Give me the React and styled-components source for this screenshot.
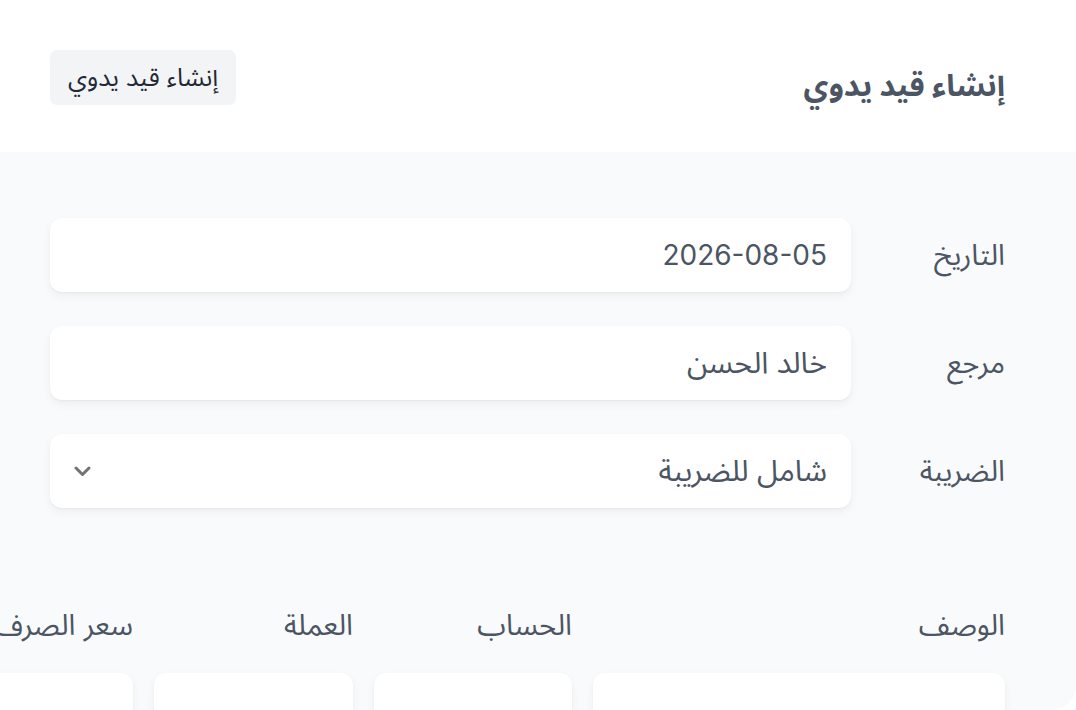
import React from "react";
import styled, { createGlobalStyle } from "styled-components";

const GlobalStyle = createGlobalStyle`
  html, body {
    margin: 0;
    padding: 0;
    overflow: hidden;
    background: #ffffff;
  }
  body {
    font-family: Inter, "Noto Sans Arabic", "Noto Sans", "DejaVu Sans", sans-serif;
    color: #4b5563;
  }
  * { box-sizing: border-box; }
`;

const Page = styled.div`
  direction: rtl;
  width: 1076px;
  height: 710px;
  display: flex;
  flex-direction: column;
`;

const Header = styled.header`
  height: 152px;
  flex: none;
  display: flex;
  justify-content: space-between;
  align-items: flex-start;
  padding: 50px 71px 0 50px;
`;

const Title = styled.h1`
  margin: 0;
  font-size: 30.5px;
  line-height: 70px;
  font-weight: 700;
  color: #4b5563;
`;

const HeaderButton = styled.button`
  height: 55px;
  padding: 0 18px;
  border: none;
  border-radius: 7px;
  background: #f3f4f6;
  color: #1f2937;
  font-family: inherit;
  font-size: 25px;
  cursor: pointer;
`;

const Panel = styled.main`
  flex: 1;
  background: #f9fafb;
  border-bottom-right-radius: 24px;
  padding: 66px 71px 0 50px;
  overflow: hidden;
`;

const Form = styled.div`
  display: flex;
  flex-direction: column;
  gap: 34px;
`;

const FieldRow = styled.div`
  display: grid;
  grid-template-columns: 154px 1fr;
  align-items: center;
`;

const Label = styled.label`
  font-size: 29px;
  color: #4b5563;
`;

const Field = styled.div`
  height: 74px;
  background: #ffffff;
  border-radius: 12px;
  box-shadow: 0 1px 2px rgba(15, 23, 42, 0.04), 0 4px 10px rgba(15, 23, 42, 0.05);
  display: flex;
  align-items: center;
  justify-content: space-between;
  padding: 0 24px;
  font-size: ${(p) => (p.$numeric ? "28px" : "30px")};
  color: #4b5563;
`;

const Chevron = styled.svg`
  width: 17px;
  height: 11px;
  flex: none;
`;

const Table = styled.div`
  margin-top: 80px;
  display: grid;
  grid-template-columns: 412px 198px 199px 199px;
  column-gap: 21px;
  width: max-content;
`;

const HeadCell = styled.div`
  height: 74px;
  display: flex;
  align-items: center;
  font-size: 29px;
  color: #4b5563;
  white-space: nowrap;
`;

const BodyCell = styled.div`
  margin-top: 11px;
  height: 80px;
  background: #ffffff;
  border-radius: 12px 12px 0 0;
  box-shadow: 0 1px 2px rgba(15, 23, 42, 0.04), 0 4px 10px rgba(15, 23, 42, 0.05);
`;

const columns = ["الوصف", "الحساب", "العملة", "سعر الصرف"];

export default function App() {
  return (
    <>
      <GlobalStyle />
      <Page>
        <Header>
          <Title>إنشاء قيد يدوي</Title>
          <HeaderButton>إنشاء قيد يدوي</HeaderButton>
        </Header>
        <Panel>
          <Form>
            <FieldRow>
              <Label>التاريخ</Label>
              <Field $numeric>2026-08-05</Field>
            </FieldRow>
            <FieldRow>
              <Label>مرجع</Label>
              <Field>خالد الحسن</Field>
            </FieldRow>
            <FieldRow>
              <Label>الضريبة</Label>
              <Field>
                <span>شامل للضريبة</span>
                <Chevron viewBox="0 0 17 11" fill="none" stroke="#737373" strokeWidth="3" strokeLinecap="round" strokeLinejoin="round">
                  <polyline points="2 2 8.5 8.5 15 2" />
                </Chevron>
              </Field>
            </FieldRow>
          </Form>
          <Table>
            {columns.map((c) => (
              <HeadCell key={c}>{c}</HeadCell>
            ))}
            {columns.map((c) => (
              <BodyCell key={c + "-cell"} />
            ))}
          </Table>
        </Panel>
      </Page>
    </>
  );
}
